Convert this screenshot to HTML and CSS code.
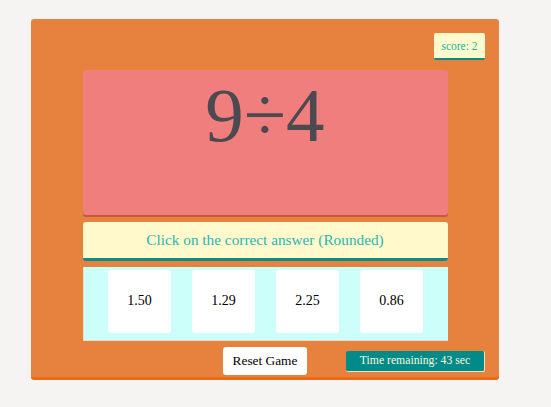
FILE: index.html
```html
<!DOCTYPE html>
<html>
<head>
<meta charset="utf-8">
<link rel="stylesheet" href="styles.css">
</head>
<body>
<div class="game">
  <div class="score-row">
    <div class="score">score: 2</div>
  </div>
  <div class="card">
    <div class="question">9÷4</div>
  </div>
  <div class="prompt">Click on the correct answer (Rounded)</div>
  <div class="answers">
    <div class="answer">1.50</div>
    <div class="answer">1.29</div>
    <div class="answer">2.25</div>
    <div class="answer">0.86</div>
  </div>
  <div class="controls">
    <span></span>
    <button class="reset">Reset Game</button>
    <div class="timer">Time remaining: 43 sec</div>
  </div>
</div>
</body>
</html>
```

FILE: styles.css
```css
html, body {
  margin: 0;
  padding: 0;
}
body {
  background: #f5f4f2;
  font-family: "Liberation Serif", "Times New Roman", serif;
  padding: 19px 0 0 31px;
}
.game {
  box-sizing: border-box;
  width: 468px;
  background: #e6823e;
  border-radius: 3px;
  border-bottom: 3px solid #ea6a18;
  padding: 14px 14px 2px 14px;
}
.score-row {
  display: flex;
  justify-content: flex-end;
}
.score {
  box-sizing: border-box;
  width: 51px;
  height: 27px;
  background: #fffacd;
  border-bottom: 2px solid #0b8c86;
  border-radius: 2px;
  color: #20b2aa;
  font-size: 11.5px;
  display: flex;
  align-items: center;
  justify-content: center;
  padding-top: 1px;
}
.card {
  width: 365px;
  height: 145px;
  margin: 10px auto 0;
  background: #f07e7d;
  border-radius: 3px;
  box-shadow: 0 2px 0 #c4593f;
  box-sizing: border-box;
  padding-top: 7px;
}
.question {
  text-align: center;
  font-size: 77px;
  line-height: 77px;
  color: #4a4a50;
}
.prompt {
  box-sizing: border-box;
  width: 365px;
  height: 39px;
  margin: 7px auto 0;
  background: #fff9cc;
  border-radius: 3px;
  border-bottom: 3px solid #0b8c86;
  color: #2bb5b5;
  font-size: 15.3px;
  display: flex;
  align-items: center;
  justify-content: center;
}
.answers {
  box-sizing: border-box;
  width: 365px;
  height: 74px;
  margin: 6px auto 0;
  background: #ccfffa;
  border-left: 1px solid #e9dfc0;
  border-bottom: 1px solid #e9dfc0;
  display: flex;
  justify-content: center;
  align-items: flex-start;
  gap: 21px;
  padding-top: 3px;
}
.answer {
  width: 63px;
  height: 63px;
  background: #ffffff;
  border-radius: 3px;
  display: flex;
  align-items: center;
  justify-content: center;
  font-size: 14px;
  color: #000;
  padding-bottom: 1px;
  box-sizing: border-box;
}
.controls {
  margin-top: 6px;
  display: grid;
  grid-template-columns: 1fr auto 1fr;
  align-items: center;
}
.reset {
  font-family: "Liberation Serif", "Times New Roman", serif;
  font-size: 13.33px;
  background: #fff;
  color: #000;
  border: none;
  border-radius: 3px;
  width: 84px;
  height: 28px;
  padding: 0;
}
.timer {
  justify-self: end;
  box-sizing: border-box;
  width: 139px;
  height: 21px;
  background: #008b8b;
  color: #fdf6d8;
  font-size: 11.7px;
  border-right: 1px solid #f0e3b0;
  border-bottom: 1px solid #f0e3b0;
  border-radius: 2px;
  display: flex;
  align-items: center;
  justify-content: center;
}
```
